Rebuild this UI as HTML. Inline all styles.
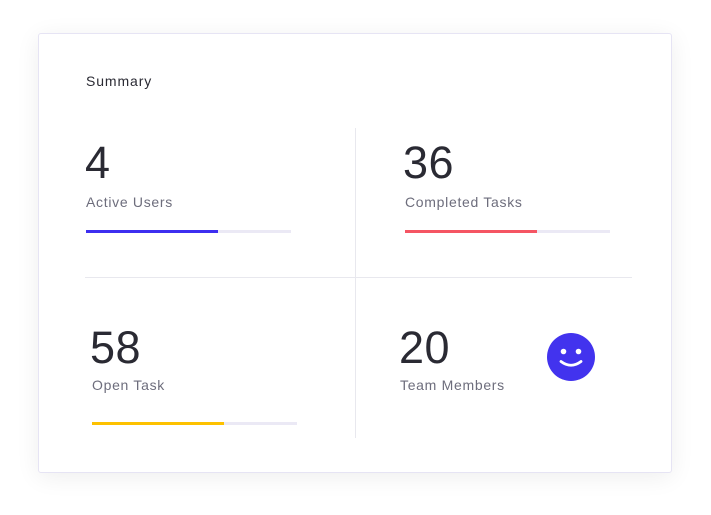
<!DOCTYPE html>
<html><head><style>
body{margin:0;width:711px;height:515px;background:#fff;font-family:"Liberation Sans",sans-serif;position:relative;overflow:hidden}
.card{position:absolute;left:38px;top:33px;width:632px;height:438px;border:1px solid #e6e4f4;border-radius:3px;box-shadow:0 4px 24px rgba(0,0,0,0.07);background:#fff}
.a{position:absolute}
.num{font-size:45px;color:#2a2a33;line-height:1;letter-spacing:0.5px}
.lbl{font-size:14px;color:#6d6d7c;letter-spacing:0.7px}
.bar{position:absolute;height:3px;width:205px;background:#ebe9f5}
.bar i{display:block;height:3px}
</style></head><body>
<div class="card"></div>
<div class="a" style="left:86px;top:73px;font-size:14px;color:#2a2a33;letter-spacing:0.9px">Summary</div>
<div class="a" style="left:355px;top:128px;width:1px;height:310px;background:#e8e8ee"></div>
<div class="a" style="left:85px;top:277px;width:547px;height:1px;background:#e8e8ee"></div>

<div class="a num" style="left:85px;top:140px">4</div>
<div class="a lbl" style="left:86px;top:194px">Active Users</div>
<div class="bar" style="left:86px;top:230px"><i style="width:132px;background:#3d2ef0"></i></div>

<div class="a num" style="left:403px;top:140px">36</div>
<div class="a lbl" style="left:405px;top:194px">Completed Tasks</div>
<div class="bar" style="left:405px;top:230px"><i style="width:132px;background:#f55563"></i></div>

<div class="a num" style="left:90px;top:325px">58</div>
<div class="a lbl" style="left:92px;top:377px">Open Task</div>
<div class="bar" style="left:92px;top:422px"><i style="width:132px;background:#fdc100"></i></div>

<div class="a num" style="left:399px;top:325px">20</div>
<div class="a lbl" style="left:400px;top:377px">Team Members</div>
<svg class="a" style="left:547px;top:333px" width="48" height="48" viewBox="0 0 48 48">
<circle cx="24" cy="24" r="24" fill="#4233ee"/>
<circle cx="16.5" cy="18.5" r="2.8" fill="#fff"/>
<circle cx="31.5" cy="18.5" r="2.8" fill="#fff"/>
<path d="M14 28.5 Q24 36 34 28.5" stroke="#fff" stroke-width="2.8" fill="none" stroke-linecap="round"/>
</svg>
</body></html>
